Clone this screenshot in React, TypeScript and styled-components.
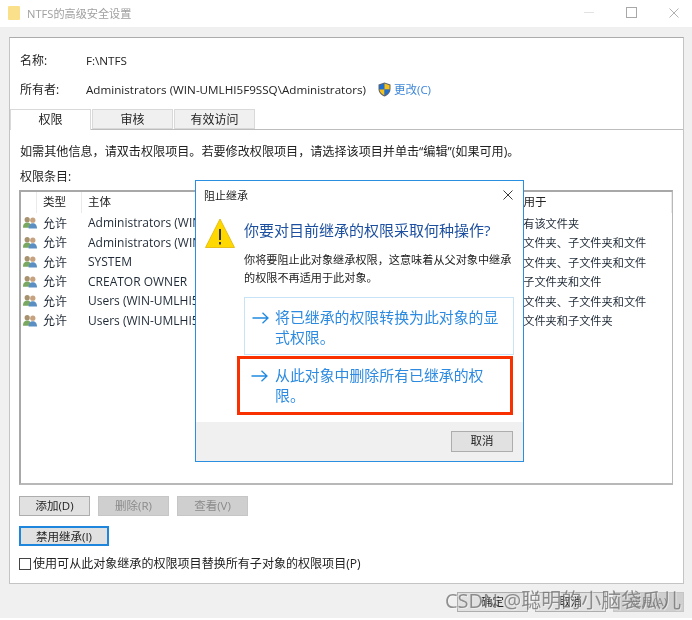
import styled, { createGlobalStyle } from 'styled-components'

const GlobalStyle = createGlobalStyle`
  html, body {
    margin: 0;
    padding: 0;
    background: #fff;
  }
  body {
    font-family: "Open Sans", "Noto Sans CJK SC", sans-serif;
    font-size: 12px;
    color: #222;
  }
`

const entries = [
  { subject: 'Administrators (WIN-UMLHI5F9SSQ\\Administrators)', access: '完全控制', from: 'F:\\', scope: '只有该文件夹' },
  { subject: 'Administrators (WIN-UMLHI5F9SSQ\\Administrators)', access: '完全控制', from: 'F:\\', scope: '此文件夹、子文件夹和文件' },
  { subject: 'SYSTEM', access: '完全控制', from: 'F:\\', scope: '此文件夹、子文件夹和文件' },
  { subject: 'CREATOR OWNER', access: '完全控制', from: 'F:\\', scope: '仅子文件夹和文件' },
  { subject: 'Users (WIN-UMLHI5F9SSQ\\Users)', access: '读取和执行', from: 'F:\\', scope: '此文件夹、子文件夹和文件' },
  { subject: 'Users (WIN-UMLHI5F9SSQ\\Users)', access: '特殊', from: 'F:\\', scope: '此文件夹和子文件夹' }
]

const UsersIcon = () => (
  <svg width="15" height="13" viewBox="0 0 15 13">
    <circle cx="4.500" cy="3.500" r="2.800" fill="#a8916f" />
    <path d="M0 12c0-4 2-5.500 4.500-5.500S9 8 9 12z" fill="#7aa860" />
    <circle cx="10.500" cy="4" r="2.800" fill="#c7a27e" />
    <path d="M6 13c0-4 2-5.800 4.500-5.800S15 9 15 13z" fill="#5b8fc4" />
  </svg>
)

const ShieldIcon = () => (
  <svg width="13" height="15" viewBox="0 0 13 15">
    <path d="M6.500 0.500 12.500 2.500V7c0 3.500-2.500 6-6 7.500C3 13 0.500 10.500 0.500 7V2.500z" fill="#5a6470" />
    <path d="M6.500 1.500V7.500H1.500V3.200z" fill="#1f6fd0" />
    <path d="M6.500 1.500 11.500 3.200V7.500H6.500z" fill="#f5c21c" />
    <path d="M1.500 7.500H6.500V13.200C3.500 12 1.700 10 1.500 7.500z" fill="#f5c21c" />
    <path d="M6.500 7.500H11.500C11.300 10 9.500 12 6.500 13.200z" fill="#1f6fd0" />
  </svg>
)

const WarningIcon = () => (
  <svg width="30" height="30" viewBox="0 0 30 30">
    <path d="M15 1 29.500 29.500H0.500z" fill="#ffd800" stroke="#e0b400" strokeWidth="0.800" />
    <rect x="14" y="11" width="2" height="11" fill="#333" />
    <rect x="14" y="24" width="2" height="2.500" fill="#333" />
  </svg>
)

const ArrowIcon = () => (
  <svg width="17" height="12" viewBox="0 0 17 12">
    <path d="M0.500 6H16M10.500 0.800 16 6l-5.500 5.200" fill="none" stroke="#1f8ae0" strokeWidth="1.300" />
  </svg>
)

const CloseIcon = ({ size, color }: { size: number; color: string }) => (
  <svg width={size} height={size} viewBox="0 0 10 10">
    <path d="M0.500 0.500 9.500 9.500M9.500 0.500 0.500 9.500" fill="none" stroke={color} strokeWidth="0.900" />
  </svg>
)

const App = () => {
  return (
    <Page>
      <GlobalStyle />
      <TitleBar>
        <FolderGlyph />
        <WindowTitle>NTFS的高级安全设置</WindowTitle>
        <WindowControls>
          <MinimizeGlyph />
          <MaximizeGlyph />
          <CloseIcon size={10} color="#a8a8a8" />
        </WindowControls>
      </TitleBar>
      <Body>
        <Panel>
          <InfoRow $top={13}>
            <InfoLabel>名称:</InfoLabel>
            <span>F:\NTFS</span>
          </InfoRow>
          <InfoRow $top={11}>
            <InfoLabel>所有者:</InfoLabel>
            <span>Administrators (WIN-UMLHI5F9SSQ\Administrators)</span>
            <ChangeLink>
              <ShieldIcon />
              <span>更改(C)</span>
            </ChangeLink>
          </InfoRow>
          <Tabs>
            <Tab $active>权限</Tab>
            <Tab>审核</Tab>
            <Tab>有效访问</Tab>
          </Tabs>
          <TabBody>
            <Hint>如需其他信息，请双击权限项目。若要修改权限项目，请选择该项目并单击“编辑”(如果可用)。</Hint>
            <EntriesLabel>权限条目:</EntriesLabel>
            <EntriesTable>
              <HeaderRow>
                <HeaderCell />
                <HeaderCell>类型</HeaderCell>
                <HeaderCell>主体</HeaderCell>
                <HeaderCell>访问</HeaderCell>
                <HeaderCell>继承于</HeaderCell>
                <HeaderCell>应用于</HeaderCell>
              </HeaderRow>
              {entries.map((entry, i) => (
                <EntryRow key={i}>
                  <IconCell>
                    <UsersIcon />
                  </IconCell>
                  <Cell>允许</Cell>
                  <Cell>{entry.subject}</Cell>
                  <Cell>{entry.access}</Cell>
                  <Cell>{entry.from}</Cell>
                  <ScopeCell>{entry.scope}</ScopeCell>
                </EntryRow>
              ))}
            </EntriesTable>
            <ActionRow>
              <ActionButton>添加(D)</ActionButton>
              <ActionButton $disabled>删除(R)</ActionButton>
              <ActionButton $disabled>查看(V)</ActionButton>
            </ActionRow>
            <InheritButton>禁用继承(I)</InheritButton>
            <CheckRow>
              <CheckBox />
              <span>使用可从此对象继承的权限项目替换所有子对象的权限项目(P)</span>
            </CheckRow>
          </TabBody>
        </Panel>
        <WindowFooter>
          <ActionButton>确定</ActionButton>
          <ActionButton>取消</ActionButton>
          <ActionButton $disabled>应用(A)</ActionButton>
        </WindowFooter>
      </Body>

      <Dialog>
        <DialogTitle>
          <span>阻止继承</span>
          <CloseIcon size={10} color="#222" />
        </DialogTitle>
        <DialogMain>
          <WarningIcon />
          <DialogContent>
            <DialogHeading>你要对目前继承的权限采取何种操作?</DialogHeading>
            <DialogText>你将要阻止此对象继承权限，这意味着从父对象中继承的权限不再适用于此对象。</DialogText>
          </DialogContent>
        </DialogMain>
        <CommandLink>
          <ArrowIcon />
          <span>将已继承的权限转换为此对象的显式权限。</span>
        </CommandLink>
        <CommandLink $marked>
          <ArrowIcon />
          <span>从此对象中删除所有已继承的权限。</span>
        </CommandLink>
        <DialogFooter>
          <CancelButton>取消</CancelButton>
        </DialogFooter>
      </Dialog>

      <Watermark>CSDN @聪明的小脑袋瓜儿</Watermark>
    </Page>
  )
}

const Page = styled.div`
  position: relative;
  width: 692px;
  height: 620px;
  overflow: hidden;
  background: #fff;
  filter: blur(0.4px);
`

const TitleBar = styled.div`
  box-sizing: border-box;
  height: 27px;
  display: flex;
  align-items: center;
  padding: 0 13px 2px 8px;
  background: #fff;
`

const FolderGlyph = styled.div`
  width: 12px;
  height: 14px;
  margin-right: 7px;
  border-radius: 1px;
  background: #fbe08c;
`

const WindowTitle = styled.div`
  flex: 1;
  color: #a0a0a0;
  font-size: 11.15px;
`

const WindowControls = styled.div`
  display: flex;
  align-items: center;
  gap: 32px;
`

const MinimizeGlyph = styled.div`
  width: 10px;
  height: 1px;
  background: #e2e2e2;
`

const MaximizeGlyph = styled.div`
  width: 9px;
  height: 9px;
  border: 1px solid #a8a8a8;
`

const Body = styled.div`
  height: 591px;
  box-sizing: border-box;
  padding: 10px 8px 0 9px;
  background: #f0f0f0;
`

const Panel = styled.div`
  box-sizing: border-box;
  height: 547px;
  background: #fff;
  border: 1px solid #c4c4c4;
  border-top-color: #acacac;
`

const InfoRow = styled.div<{ $top: number }>`
  display: flex;
  align-items: center;
  height: 18px;
  margin-top: ${p => p.$top}px;
  padding-left: 10px;
  font-size: 11.65px;
`

const InfoLabel = styled.span`
  width: 66px;
  font-size: 12px;
`

const ChangeLink = styled.span`
  display: inline-flex;
  align-items: center;
  gap: 3px;
  margin-left: 12px;
  color: #3d86d8;
  font-size: 11.5px;
`

const Tabs = styled.div`
  display: flex;
  gap: 1px;
  height: 20px;
  margin-top: 11px;
  border-bottom: 1px solid #bdbdbd;
`

const Tab = styled.div<{ $active?: boolean }>`
  box-sizing: border-box;
  width: 81px;
  height: ${p => (p.$active ? 21 : 20)}px;
  line-height: 19px;
  text-align: center;
  font-size: 12px;
  background: ${p => (p.$active ? '#fff' : '#f0f0f0')};
  border: 1px solid #d9d9d9;
  border-bottom: ${p => (p.$active ? 'none' : '1px solid #d9d9d9')};
  position: relative;
`

const TabBody = styled.div`
  padding: 12px 10px 0 9px;
`

const Hint = styled.div`
  height: 20px;
  line-height: 20px;
  padding-left: 1px;
  font-size: 12.1px;
  white-space: nowrap;
`

const EntriesLabel = styled.div`
  height: 18px;
  line-height: 18px;
  margin-top: 6px;
  padding-left: 1px;
`

const EntriesTable = styled.div`
  box-sizing: border-box;
  height: 295px;
  margin-top: 4px;
  overflow: hidden;
  background: #fff;
  border: 1px solid #b8b8b8;
  border-top: 2px solid #a8a8a8;
  border-left: 2px solid #a8a8a8;
  border-bottom-width: 2px;
`

const HeaderRow = styled.div`
  display: grid;
  grid-template-columns: 16px 45px 240px 85px 99px 1fr;
  height: 21px;
  align-items: stretch;
`

const HeaderCell = styled.div`
  padding-left: 6px;
  line-height: 19px;
  font-size: 11.5px;
  border-right: 1px solid #eaeaea;
`

const EntryRow = styled.div`
  display: grid;
  grid-template-columns: 16px 45px 240px 85px 99px 1fr;
  height: 19.5px;
  align-items: center;
`

const IconCell = styled.div`
  display: flex;
  align-items: center;
  padding-left: 2px;
`

const Cell = styled.div`
  padding-left: 6px;
  font-size: 12px;
  color: #1f2a36;
  white-space: nowrap;
  overflow: hidden;
`

const ScopeCell = styled(Cell)`
  font-size: 11.2px;
`

const ActionRow = styled.div`
  display: flex;
  gap: 8px;
  margin-top: 11px;
`

const ActionButton = styled.div<{ $disabled?: boolean }>`
  box-sizing: border-box;
  width: 71px;
  height: 20px;
  line-height: 18px;
  text-align: center;
  font-size: 11.5px;
  background: ${p => (p.$disabled ? '#cfcfcf' : '#e1e1e1')};
  color: ${p => (p.$disabled ? '#8a8a8a' : '#222')};
  border: 1px solid ${p => (p.$disabled ? '#c6c6c6' : '#adadad')};
`

const InheritButton = styled.div`
  box-sizing: border-box;
  width: 90px;
  height: 20px;
  margin-top: 10px;
  line-height: 17px;
  text-align: center;
  font-size: 11.5px;
  background: #e1e1e1;
  border: 2px solid #1e86dc;
`

const CheckRow = styled.div`
  display: flex;
  align-items: center;
  gap: 2px;
  margin-top: 9px;
  height: 16px;
  font-size: 12.05px;
  white-space: nowrap;
`

const CheckBox = styled.div`
  box-sizing: border-box;
  width: 12px;
  height: 12px;
  margin-top: 2px;
  background: #fff;
  border: 1px solid #444;
`

const WindowFooter = styled.div`
  display: flex;
  justify-content: flex-end;
  gap: 7px;
  margin-top: 8px;
`

const Dialog = styled.div`
  position: absolute;
  left: 195px;
  top: 180px;
  box-sizing: border-box;
  width: 329px;
  height: 282px;
  background: #fff;
  border: 1px solid #2a8fe0;
  display: flex;
  flex-direction: column;
`

const DialogTitle = styled.div`
  display: flex;
  align-items: center;
  justify-content: space-between;
  height: 27px;
  padding: 0 10px 0 8px;
  font-size: 11px;
`

const DialogMain = styled.div`
  display: flex;
  gap: 9px;
  padding: 10px 10px 0 9px;
`

const DialogContent = styled.div`
  flex: 1;
`

const DialogHeading = styled.div`
  height: 22px;
  line-height: 24px;
  font-size: 15px;
  color: #1c4f9f;
  white-space: nowrap;
`

const DialogText = styled.div`
  margin-top: 11px;
  line-height: 18px;
  font-size: 11.15px;
`

const CommandLink = styled.div<{ $marked?: boolean }>`
  box-sizing: border-box;
  display: flex;
  align-items: flex-start;
  font-size: 14.9px;
  line-height: 20px;
  color: #2c8ae0;
  ${p =>
    p.$marked
      ? `
    gap: 7px;
    width: 276px;
    height: 59px;
    margin: 1px 0 0 41px;
    padding: 6px 12px 0 11px;
    border: 3px solid #f93000;
  `
      : `
    gap: 6px;
    width: 270px;
    height: 58px;
    margin: 10px 0 0 48px;
    padding: 9px 12px 0 7px;
    border: 1px solid #c6e3f7;
  `}

  svg {
    flex: none;
    margin-top: 5px;
  }
`

const DialogFooter = styled.div`
  flex: 1;
  display: flex;
  justify-content: flex-end;
  align-items: center;
  margin-top: 7px;
  padding-right: 10px;
  background: #f0f0f0;
`

const CancelButton = styled.div`
  box-sizing: border-box;
  width: 62px;
  height: 21px;
  line-height: 18px;
  text-align: center;
  font-size: 11.5px;
  background: #e1e1e1;
  border: 1px solid #adadad;
`

const Watermark = styled.div`
  position: absolute;
  left: 445px;
  top: 587px;
  font-size: 20px;
  line-height: 28px;
  white-space: nowrap;
  color: rgba(110, 110, 110, 0.75);
  text-shadow: 1px 1px 0 rgba(255, 255, 255, 0.45);
`

export default App
